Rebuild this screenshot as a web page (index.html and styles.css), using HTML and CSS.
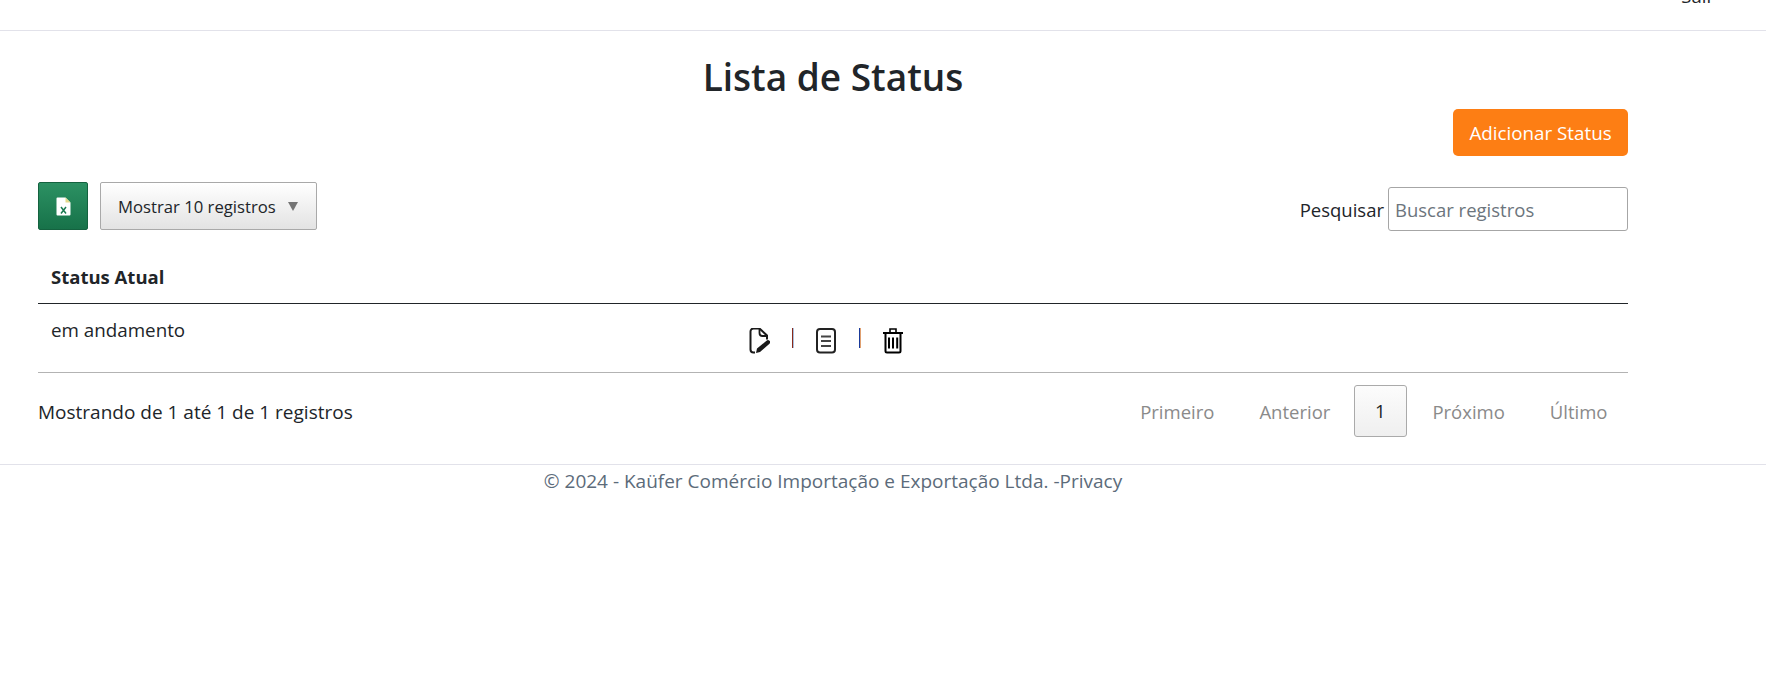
FILE: index.html
```html
<!DOCTYPE html>
<html lang="pt-br">
<head>
    <meta charset="UTF-8">
    <meta name="viewport" content="width=device-width, initial-scale=1.0">
    <title>Lista de Status</title>
    <link rel="stylesheet" href="styles.css">
</head>
<body>

    <header class="topbar">
        <a class="logout" href="#">Sair</a>
    </header>

    <main class="container">
        <h1>Lista de Status</h1>

        <div class="actions">
            <a class="btn-add" href="#">Adicionar Status</a>
        </div>

        <div class="toolbar">
            <div class="toolbar-left">
                <button class="btn-excel" type="button" aria-label="Excel">
                    <svg width="15" height="19" viewBox="0 0 15 19">
                        <path d="M1.500 .5h8l5 5v12a1 1 0 0 1-1 1h-12a1 1 0 0 1-1-1v-16a1 1 0 0 1 1-1z" fill="#fff"/>
                        <path d="M9.500 .5v5h5z" fill="#e4d98a"/>
                        <path d="M5 10l5 6.500M10 10l-5 6.500" stroke="#1a7a50" stroke-width="1.500" fill="none"/>
                    </svg>
                </button>
                <button class="btn-length" type="button">
                    Mostrar 10 registros
                    <span class="caret"></span>
                </button>
            </div>
            <label class="search">
                Pesquisar
                <input type="text" placeholder="Buscar registros">
            </label>
        </div>

        <table class="status-table">
            <thead>
                <tr>
                    <th class="col-status">Status Atual</th>
                    <th></th>
                </tr>
            </thead>
            <tbody>
                <tr>
                    <td>em andamento</td>
                    <td>
                        <div class="row-icons">
                            <a href="#" aria-label="Editar">
                                <svg width="21" height="26" viewBox="0 0 21 26" fill="none" stroke="#1a1a1a" stroke-width="2">
                                    <path d="M6 24.500h-1.500a3 3 0 0 1-3-3v-18a3 3 0 0 1 3-3h6l7.500 7v4"/>
                                    <path d="M10.500 1v4a3 3 0 0 0 3 3h4.500" stroke-width="1.800"/>
                                    <path d="M7 25l1-4.500 9.500-7.800a2 2 0 0 1 3 3l-9.500 8.300z" fill="#1a1a1a" stroke="none"/>
                                </svg>
                            </a>
                            <span class="sep sep-red"></span>
                            <a href="#" aria-label="Detalhes">
                                <svg width="21" height="26" viewBox="0 0 21 26" fill="none" stroke="#222" stroke-width="2">
                                    <rect x="1" y="1" width="18" height="23.500" rx="3"/>
                                    <path d="M5 8.500h10M5 13h10M5 18h10" stroke="#444" stroke-width="2.200"/>
                                </svg>
                            </a>
                            <span class="sep sep-blue"></span>
                            <a href="#" aria-label="Excluir">
                                <svg width="20" height="26" viewBox="0 0 20 26" fill="none" stroke="#000" stroke-width="2">
                                    <path d="M0 5h20"/>
                                    <path d="M7 4v-3h6v3" stroke-width="1.600"/>
                                    <path d="M2.500 5v18a1.500 1.500 0 0 0 1.500 1.500h12a1.500 1.500 0 0 0 1.500-1.500v-18"/>
                                    <path d="M6 9.500v11M10 9.500v11M14.200 9.500v11"/>
                                </svg>
                            </a>
                        </div>
                    </td>
                </tr>
            </tbody>
        </table>

        <div class="table-footer">
            <span class="info">Mostrando de 1 até 1 de 1 registros</span>
            <nav class="pagination">
                <a href="#">Primeiro</a>
                <a href="#">Anterior</a>
                <a class="current" href="#">1</a>
                <a href="#">Próximo</a>
                <a href="#">Último</a>
            </nav>
        </div>
    </main>

    <footer class="site-footer">
        <div class="footer-text">© 2024 - Kaüfer Comércio Importação e Exportação Ltda. -<a href="#">Privacy</a></div>
    </footer>

</body>
</html>
```

FILE: styles.css
```css
body { margin: 0; font-family: "Open Sans", "Noto Sans", sans-serif; font-size: 18.5px; color: #212529; background: #fff; }
a { text-decoration: none; color: inherit; }

.topbar { height: 30px; border-bottom: 1px solid #e2e2ea; display: flex; justify-content: flex-end; align-items: flex-end; padding-right: 52px; overflow: hidden; }
.logout { line-height: 24px; margin-bottom: 22px; }

.container { width: 1590px; margin-left: 38px; }
h1 { margin: 0; padding-top: 20px; font-size: 37px; line-height: 52px; font-weight: 600; text-align: center; }

.actions { display: flex; justify-content: flex-end; margin-top: 6px; }
.btn-add { display: block; width: 175px; height: 47px; line-height: 48px; font-size: 18.800px; text-align: center; background: #fd7e14; color: #fff; border-radius: 5px; }

.toolbar { display: flex; justify-content: space-between; align-items: flex-start; height: 49px; margin-top: 26px; }
.toolbar-left { display: flex; gap: 12px; }
.btn-excel { width: 50px; height: 48px; padding: 0; display: flex; align-items: center; justify-content: center; border: 1px solid #14623f; border-radius: 2px; background: linear-gradient(#2c9163, #177249); }
.btn-length { width: 217px; height: 48px; padding: 0 18px 0 17px; display: flex; align-items: center; justify-content: space-between; font: inherit; font-size: 16.700px; color: #212529; border: 1px solid #a9a9a9; border-radius: 2px; background: linear-gradient(#fff, #e3e3e3); }
.caret { width: 0; height: 0; border-left: 5px solid transparent; border-right: 5px solid transparent; border-top: 9px solid #757575; }
.search { display: flex; align-items: center; gap: 4px; margin-top: 5px; }
.search input { width: 240px; height: 44px; box-sizing: border-box; padding: 0 6px; font: inherit; border: 1px solid #a6a6a6; border-radius: 3px; }
.search input::placeholder { color: #6c757d; }

.status-table { width: 100%; margin-top: 24px; border-collapse: collapse; }
.status-table th { text-align: left; padding: 0 12px 4px 13px; height: 48px; box-sizing: border-box; border-bottom: 1px solid #212529; font-weight: 700; }
.status-table .col-status { width: 698px; }
.status-table td { height: 69px; padding: 13px 12px 12px 13px; box-sizing: border-box; vertical-align: top; border-bottom: 1px solid #b3b3b3; font-size: 18.800px; }
.row-icons { display: flex; align-items: flex-start; gap: 22px; margin-top: 11px; }
.row-icons a { display: block; height: 26px; }
.row-icons svg { display: block; }
.sep { width: 2px; height: 20px; }
.sep-red { background: linear-gradient(90deg, #8a2a1a 50%, #a8c0e0 50%); }
.sep-blue { background: linear-gradient(90deg, #1a3a9a 50%, #e0a070 50%); }

.table-footer { display: flex; justify-content: space-between; align-items: flex-start; height: 79px; padding-top: 12px; }
.info { line-height: 54px; font-size: 19px; }
.pagination { display: flex; align-items: flex-start; margin-right: -2px; }
.pagination a { padding: 0 22.500px; line-height: 54px; color: #8a8a8a; }
.pagination .current { width: 53px; height: 52px; margin: 0 3px 0 1px; box-sizing: border-box; padding: 0; text-align: center; line-height: 50px; color: #212529; border: 1px solid #aaa; border-radius: 3px; background: linear-gradient(#fcfcfc, #efefef); }

.site-footer { border-top: 1px solid #e2e2ea; }
.footer-text { width: 1590px; margin-left: 38px; text-align: center; line-height: 32px; font-size: 19px; color: #5c6b7a; }
```
